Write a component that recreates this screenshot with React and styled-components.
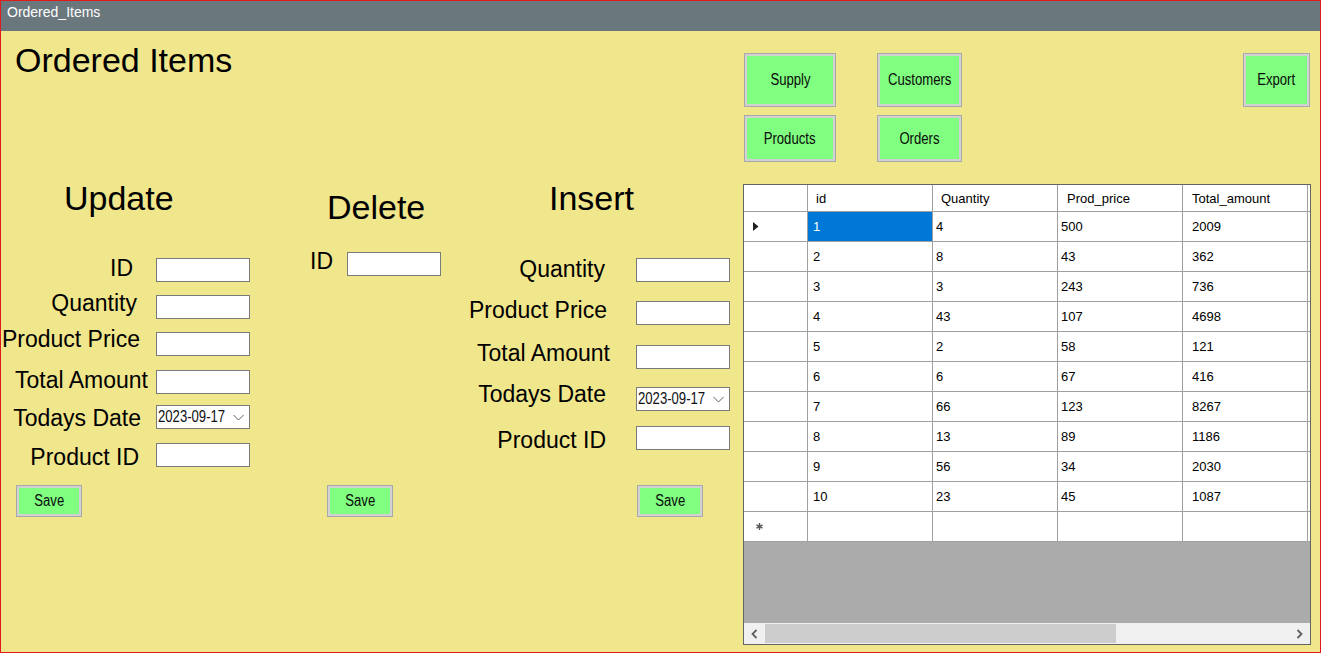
import React from "react";
import styled, { createGlobalStyle } from "styled-components";

const GlobalStyle = createGlobalStyle`
  html, body {
    margin: 0;
    padding: 0;
  }
  body {
    font-family: "Liberation Sans", Arial, sans-serif;
    background: #f0e68c;
    overflow: hidden;
  }
  * {
    box-sizing: border-box;
  }
`;

const Window = styled.div`
  width: 1321px;
  height: 653px;
  border: 1px solid #e01b1b;
  background: #f0e68c;
  display: flex;
  flex-direction: column;
  overflow: hidden;
`;

const TitleBar = styled.div`
  flex: none;
  height: 30px;
  background: #6a777d;
  color: #ffffff;
  font-size: 14px;
  line-height: 16px;
  padding: 3px 0 0 6px;
`;

const Body = styled.div`
  flex: 1;
  display: grid;
  grid-template-columns: 742px 1fr;
  grid-template-rows: 153px 1fr;
`;

const PageTitle = styled.h1`
  margin: 0;
  padding: 13px 0 0 14px;
  font-size: 34px;
  font-weight: normal;
  line-height: 33px;
  color: #000;
`;

const TopActions = styled.div`
  display: flex;
  justify-content: space-between;
  align-items: flex-start;
  padding: 22px 10px 0 1px;
`;

const NavGrid = styled.div`
  display: grid;
  grid-template-columns: 92px 85px;
  grid-template-rows: 54px 47px;
  column-gap: 41px;
  row-gap: 8px;
`;

const GreenButton = styled.button`
  width: ${(p) => p.w}px;
  height: ${(p) => p.h}px;
  margin: 0;
  padding: 0;
  display: flex;
  align-items: center;
  justify-content: center;
  background: #80ff80;
  border: 1px solid #a8a8a8;
  box-shadow: inset 0 0 0 2px #d2d2d2;
  color: #0a0a0a;
  cursor: pointer;
`;

/* the form uses a tall, condensed face; squeeze Liberation Sans to match */
const Narrow = styled.span`
  display: inline-block;
  flex: none;
  font-family: "Liberation Sans", Arial, sans-serif;
  font-size: 16px;
  line-height: 18px;
  white-space: nowrap;
  transform: scaleX(0.82);
  transform-origin: ${(p) => (p.fit ? "left center" : "center")};
  width: ${(p) => (p.fit ? `${p.fit}px` : "auto")};
`;

const Forms = styled.div`
  display: flex;
  align-items: flex-start;
`;

const Section = styled.section`
  flex: none;
  width: ${(p) => p.w}px;
  display: flex;
  flex-direction: column;
  align-items: flex-start;
`;

const SectionHeading = styled.h2`
  margin: ${(p) => p.top || 0}px 0 0 ${(p) => p.indent}px;
  font-size: 34px;
  font-weight: normal;
  line-height: 28px;
  color: #000;
`;

const FieldRow = styled.div`
  display: flex;
  align-items: flex-start;
  height: 24px;
  margin-top: ${(p) => p.gap}px;
`;

const FieldLabel = styled.label`
  flex: none;
  width: ${(p) => p.col}px;
  padding-right: ${(p) => p.pad}px;
  margin-top: ${(p) => p.dy}px;
  text-align: right;
  white-space: nowrap;
  font-size: 23px;
  line-height: 23px;
  color: #000;
`;

const TextBox = styled.input`
  width: 94px;
  height: 24px;
  margin: 0;
  padding: 0 3px;
  border: 1px solid #7a7a7a;
  background: #ffffff;
  font-family: "Liberation Sans", Arial, sans-serif;
  font-size: 14px;
  outline: none;
`;

const DateBox = styled.div`
  width: 94px;
  height: 24px;
  border: 1px solid #7a7a7a;
  background: #ffffff;
  display: flex;
  align-items: center;
  padding: 0 5px 0 1px;
  color: #111;
  overflow: hidden;
`;

const DateArrow = styled.svg`
  margin-left: auto;
  flex: none;
`;

const SaveRow = styled.div`
  display: flex;
  margin: ${(p) => p.gap}px 0 0 ${(p) => p.left}px;
`;

const GridFrame = styled.div`
  width: 568px;
  height: 461px;
  border: 1px solid #646464;
  background: #ababab;
  display: flex;
  flex-direction: column;
  overflow: hidden;
`;

const GridRow = styled.div`
  flex: none;
  display: flex;
  height: ${(p) => p.h}px;
`;

const Cell = styled.div`
  flex: none;
  width: ${(p) => p.w}px;
  display: flex;
  align-items: center;
  padding-left: ${(p) => p.pad || 0}px;
  border-right: 1px solid #a0a0a0;
  border-bottom: 1px solid #a0a0a0;
  background: ${(p) => (p.selected ? "#0078d7" : "#ffffff")};
  color: ${(p) => (p.selected ? "#ffffff" : "#000000")};
  font-size: 13px;
  white-space: nowrap;
`;

const GrayArea = styled.div`
  flex: 1;
`;

const ScrollBar = styled.div`
  flex: none;
  height: 21px;
  display: flex;
  background: #f0f0f0;
`;

const ArrowButton = styled.div`
  flex: none;
  width: 21px;
  display: flex;
  align-items: center;
  justify-content: center;
`;

const Track = styled.div`
  flex: 1;
  display: flex;
  align-items: center;
`;

const Thumb = styled.div`
  width: 351px;
  height: 19px;
  background: #cdcdcd;
`;

const Chevron = ({ dir }) => (
  <svg width="7" height="10" viewBox="0 0 7 10">
    <polyline
      points={dir === "left" ? "5.5,1 1.5,5 5.5,9" : "1.5,1 5.5,5 1.5,9"}
      fill="none"
      stroke="#606060"
      strokeWidth="1.8"
    />
  </svg>
);

const CurrentRow = () => (
  <svg width="6" height="9" viewBox="0 0 6 9" style={{ marginLeft: 9 }}>
    <polygon points="0,0 5.5,4.5 0,9" fill="#202020" />
  </svg>
);

const NewRow = () => (
  <svg width="7" height="7" viewBox="0 0 7 7" style={{ marginLeft: 12 }}>
    <g stroke="#555" strokeWidth="1.4">
      <line x1="3.5" y1="0" x2="3.5" y2="7" />
      <line x1="0.5" y1="1.8" x2="6.5" y2="5.2" />
      <line x1="0.5" y1="5.2" x2="6.5" y2="1.8" />
    </g>
  </svg>
);

const columns = [
  { name: "id", head: 8, pad: 5 },
  { name: "Quantity", head: 8, pad: 3 },
  { name: "Prod_price", head: 9, pad: 3 },
  { name: "Total_amount", head: 9, pad: 9 },
];

const rows = [
  [1, 4, 500, 2009],
  [2, 8, 43, 362],
  [3, 3, 243, 736],
  [4, 43, 107, 4698],
  [5, 2, 58, 121],
  [6, 6, 67, 416],
  [7, 66, 123, 8267],
  [8, 13, 89, 1186],
  [9, 56, 34, 2030],
  [10, 23, 45, 1087],
];

const updateFields = [
  { label: "ID", gap: 46, pad: 23, dy: -1 },
  { label: "Quantity", gap: 13, pad: 19, dy: -3 },
  { label: "Product Price", gap: 13, pad: 16, dy: -4 },
  { label: "Total Amount", gap: 14, pad: 8, dy: -1 },
  { label: "Todays Date", gap: 11, pad: 15, dy: 2, date: true },
  { label: "Product ID", gap: 14, pad: 17, dy: 3 },
];

const insertFields = [
  { label: "Quantity", gap: 46, pad: 31, dy: 0 },
  { label: "Product Price", gap: 19, pad: 29, dy: -2 },
  { label: "Total Amount", gap: 20, pad: 26, dy: -3 },
  { label: "Todays Date", gap: 18, pad: 30, dy: -4, date: true },
  { label: "Product ID", gap: 15, pad: 30, dy: 3 },
];

const DatePicker = () => (
  <DateBox>
    <Narrow fit={68}>2023-09-17</Narrow>
    <DateArrow width="11" height="7" viewBox="0 0 11 7">
      <polyline points="0.5,1 5.5,6 10.5,1" fill="none" stroke="#606060" strokeWidth="1" />
    </DateArrow>
  </DateBox>
);

const FieldList = ({ fields, col }) =>
  fields.map((f) => (
    <FieldRow key={f.label} gap={f.gap}>
      <FieldLabel col={col} pad={f.pad} dy={f.dy}>
        {f.label}
      </FieldLabel>
      {f.date ? <DatePicker /> : <TextBox type="text" />}
    </FieldRow>
  ));

const ActionButton = ({ w, h, children }) => (
  <GreenButton w={w} h={h}>
    <Narrow>{children}</Narrow>
  </GreenButton>
);

const DataGrid = () => (
  <GridFrame>
    <GridRow h={27}>
      <Cell w={64} />
      {columns.map((c) => (
        <Cell key={c.name} w={125} pad={c.head}>
          {c.name}
        </Cell>
      ))}
      <Cell w={125} />
    </GridRow>
    {rows.map((r, i) => (
      <GridRow key={r[0]} h={30}>
        <Cell w={64}>{i === 0 && <CurrentRow />}</Cell>
        {r.map((v, j) => (
          <Cell key={j} w={125} pad={columns[j].pad} selected={i === 0 && j === 0}>
            {v}
          </Cell>
        ))}
        <Cell w={125} />
      </GridRow>
    ))}
    <GridRow h={30}>
      <Cell w={64}>
        <NewRow />
      </Cell>
      {columns.map((c) => (
        <Cell key={c.name} w={125} />
      ))}
      <Cell w={125} />
    </GridRow>
    <GrayArea />
    <ScrollBar>
      <ArrowButton>
        <Chevron dir="left" />
      </ArrowButton>
      <Track>
        <Thumb />
      </Track>
      <ArrowButton>
        <Chevron dir="right" />
      </ArrowButton>
    </ScrollBar>
  </GridFrame>
);

export default function App() {
  return (
    <>
      <GlobalStyle />
      <Window>
        <TitleBar>Ordered_Items</TitleBar>
        <Body>
          <PageTitle>Ordered Items</PageTitle>
          <TopActions>
            <NavGrid>
              <ActionButton w={92} h={54}>Supply</ActionButton>
              <ActionButton w={85} h={54}>Customers</ActionButton>
              <ActionButton w={92} h={47}>Products</ActionButton>
              <ActionButton w={85} h={47}>Orders</ActionButton>
            </NavGrid>
            <ActionButton w={67} h={54}>Export</ActionButton>
          </TopActions>
          <Forms>
            <Section w={299}>
              <SectionHeading indent={63}>Update</SectionHeading>
              <FieldList fields={updateFields} col={155} />
              <SaveRow gap={18} left={15}>
                <ActionButton w={66} h={32}>Save</ActionButton>
              </SaveRow>
            </Section>
            <Section w={150}>
              <SectionHeading indent={27} top={9}>Delete</SectionHeading>
              <FieldRow gap={31}>
                <FieldLabel col={47} pad={14} dy={-2}>
                  ID
                </FieldLabel>
                <TextBox type="text" />
              </FieldRow>
              <SaveRow gap={209} left={27}>
                <ActionButton w={66} h={32}>Save</ActionButton>
              </SaveRow>
            </Section>
            <Section w={292}>
              <SectionHeading indent={99}>Insert</SectionHeading>
              <FieldList fields={insertFields} col={186} />
              <SaveRow gap={35} left={187}>
                <ActionButton w={66} h={32}>Save</ActionButton>
              </SaveRow>
            </Section>
          </Forms>
          <DataGrid />
        </Body>
      </Window>
    </>
  );
}
